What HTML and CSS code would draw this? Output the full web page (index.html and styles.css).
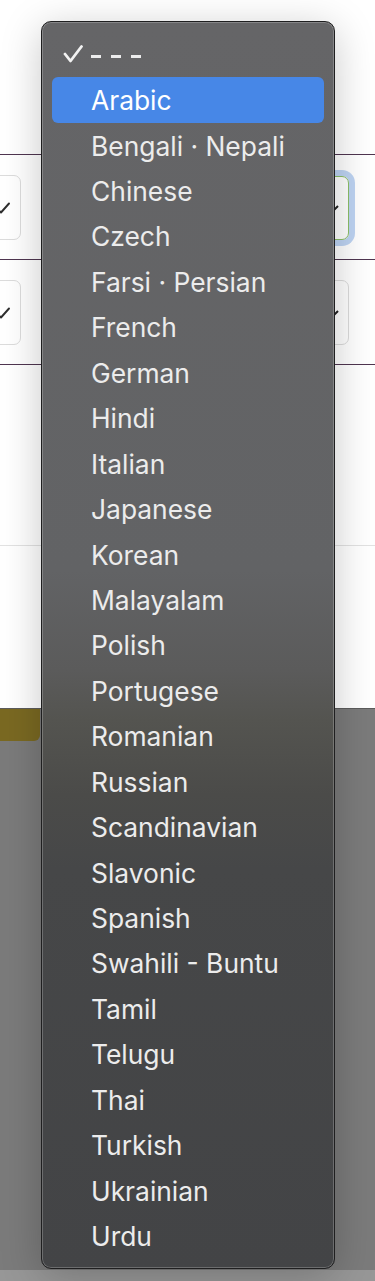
FILE: index.html
```html
<!DOCTYPE html>
<html lang="en">
<head>
<meta charset="utf-8">
<title>Language menu</title>
<link rel="stylesheet" href="styles.css">
</head>
<body>
<div class="page">
  <div class="sheet">
    <div class="sheet-top"></div>
    <div class="row">
      <div class="chk-box">
        <svg class="chk" viewBox="0 0 14 14" width="14" height="14"><path d="M1 7.5 L5 11.5 L13 2.5" fill="none" stroke="#2e2e2e" stroke-width="1.9" stroke-linecap="round" stroke-linejoin="round"/></svg>
      </div>
      <div class="select select-focus">
        <svg class="caret" viewBox="0 0 10 6" width="10" height="6"><path d="M1 1 L5 5 L9 1" fill="none" stroke="#222" stroke-width="2"/></svg>
      </div>
    </div>
    <div class="row">
      <div class="chk-box">
        <svg class="chk" viewBox="0 0 14 14" width="14" height="14"><path d="M1 7.5 L5 11.5 L13 2.5" fill="none" stroke="#2e2e2e" stroke-width="1.9" stroke-linecap="round" stroke-linejoin="round"/></svg>
      </div>
      <div class="select">
        <svg class="caret" viewBox="0 0 10 6" width="10" height="6"><path d="M1 1 L5 5 L9 1" fill="none" stroke="#222" stroke-width="2"/></svg>
      </div>
    </div>
    <div class="rule-end"></div>
    <div class="rule-light"></div>
  </div>
  <div class="backdrop">
    <div class="tab"></div>
    <div class="backdrop-fill"></div>
    <div class="backdrop-strip"></div>
  </div>

  <div class="menu">
    <ul class="menu-list">
      <li class="item item-checked">
        <svg class="tick" viewBox="0 0 20 18" width="20" height="18"><path d="M2 9 L7.5 16 L18.5 1.5" fill="none" stroke="#f2f2f2" stroke-width="2.8" stroke-linecap="round" stroke-linejoin="round"/></svg>
        <span class="dashes"><i></i><i></i><i></i></span>
      </li>
      <li class="item item-active">Arabic</li>
      <li class="item">Bengali · Nepali</li>
      <li class="item">Chinese</li>
      <li class="item">Czech</li>
      <li class="item">Farsi · Persian</li>
      <li class="item">French</li>
      <li class="item">German</li>
      <li class="item">Hindi</li>
      <li class="item">Italian</li>
      <li class="item">Japanese</li>
      <li class="item">Korean</li>
      <li class="item">Malayalam</li>
      <li class="item">Polish</li>
      <li class="item">Portugese</li>
      <li class="item">Romanian</li>
      <li class="item">Russian</li>
      <li class="item">Scandinavian</li>
      <li class="item">Slavonic</li>
      <li class="item">Spanish</li>
      <li class="item">Swahili - Buntu</li>
      <li class="item">Tamil</li>
      <li class="item">Telugu</li>
      <li class="item">Thai</li>
      <li class="item">Turkish</li>
      <li class="item">Ukrainian</li>
      <li class="item">Urdu</li>
    </ul>
  </div>
</div>
</body>
</html>
```

FILE: styles.css
```css
* { box-sizing: border-box; }

html, body {
  margin: 0;
  padding: 0;
}

body {
  width: 375px;
  height: 1281px;
  overflow: hidden;
  font-family: Inter, "Noto Sans", "Liberation Sans", sans-serif;
  background: #7b7b7b;
}

.page {
  position: relative;
  width: 375px;
  height: 1281px;
  display: flex;
  flex-direction: column;
}

/* white page behind the menu */
.sheet {
  height: 708px;
  background: #ffffff;
  display: flex;
  flex-direction: column;
}

.sheet-top {
  height: 154px;
}

.row {
  height: 105px;
  border-top: 1px solid #4f3550;
  padding-top: 20px;
  display: flex;
  justify-content: space-between;
  align-items: flex-start;
}

.chk-box {
  width: 60px;
  height: 65px;
  margin-left: -39px;
  border: 1px solid #dcdcdc;
  border-radius: 7px;
  display: flex;
  align-items: center;
  justify-content: flex-end;
  padding-right: 10px;
}

.chk {
  display: block;
  margin-top: 1px;
}

.select {
  position: relative;
  width: 100px;
  height: 65px;
  margin-right: 26px;
  border: 1px solid #dcdcdc;
  border-radius: 7px;
  display: flex;
  align-items: center;
  justify-content: flex-end;
  padding-right: 9px;
}

.select-focus {
  height: 64px;
  margin-top: 1px;
  border: 1.5px solid #8cbf68;
  box-shadow: 0 0 0 6px #bed4f3;
}

.caret {
  display: block;
}

.rule-end {
  height: 181px;
  border-top: 1px solid #4f3550;
}

.rule-light {
  flex: 1;
  border-top: 1px solid #e2e2e2;
}

/* grey lower area */
.backdrop {
  flex: 1;
  display: flex;
  flex-direction: column;
  background: #7b7b7b;
  border-top: 1px solid #5c5c5c;
}

.tab {
  width: 40px;
  height: 32px;
  background: #7a6922;
  border-radius: 0 0 6px 0;
}

.backdrop-fill {
  flex: 1;
}

.backdrop-strip {
  height: 11px;
  background: #979797;
}

/* popup menu */
.menu {
  position: absolute;
  left: 41px;
  top: 21px;
  width: 294px;
  height: 1248px;
  border-radius: 10px;
  border: 1px solid #1f1f20;
  box-shadow: inset 0 0 0 1px rgba(255, 255, 255, 0.22), 0 8px 40px rgba(0, 0, 0, 0.22);
  background: linear-gradient(to bottom,
    #656567 0%,
    #626365 44%,
    #5b5b5b 52%,
    #545450 56%,
    #4b4b49 62%,
    #464748 68%,
    #434446 100%);
  padding: 10px 10px 9px 10px;
}

.menu-list {
  list-style: none;
  margin: 0;
  padding: 0;
  display: flex;
  flex-direction: column;
}

.item {
  height: 45.45px;
  display: flex;
  align-items: center;
  padding-left: 39px;
  font-size: 26.4px;
  color: #ececec;
  border-radius: 6px;
  white-space: nowrap;
}

.item-checked {
  position: relative;
}

.tick {
  position: absolute;
  left: 11px;
  top: 13px;
}

.dashes {
  display: flex;
  gap: 10px;
  margin-top: 3px;
}

.dashes i {
  display: block;
  width: 10px;
  height: 2.6px;
  background: #ececec;
}

.item-active {
  background: #4787e7;
  color: #ffffff;
}
```
